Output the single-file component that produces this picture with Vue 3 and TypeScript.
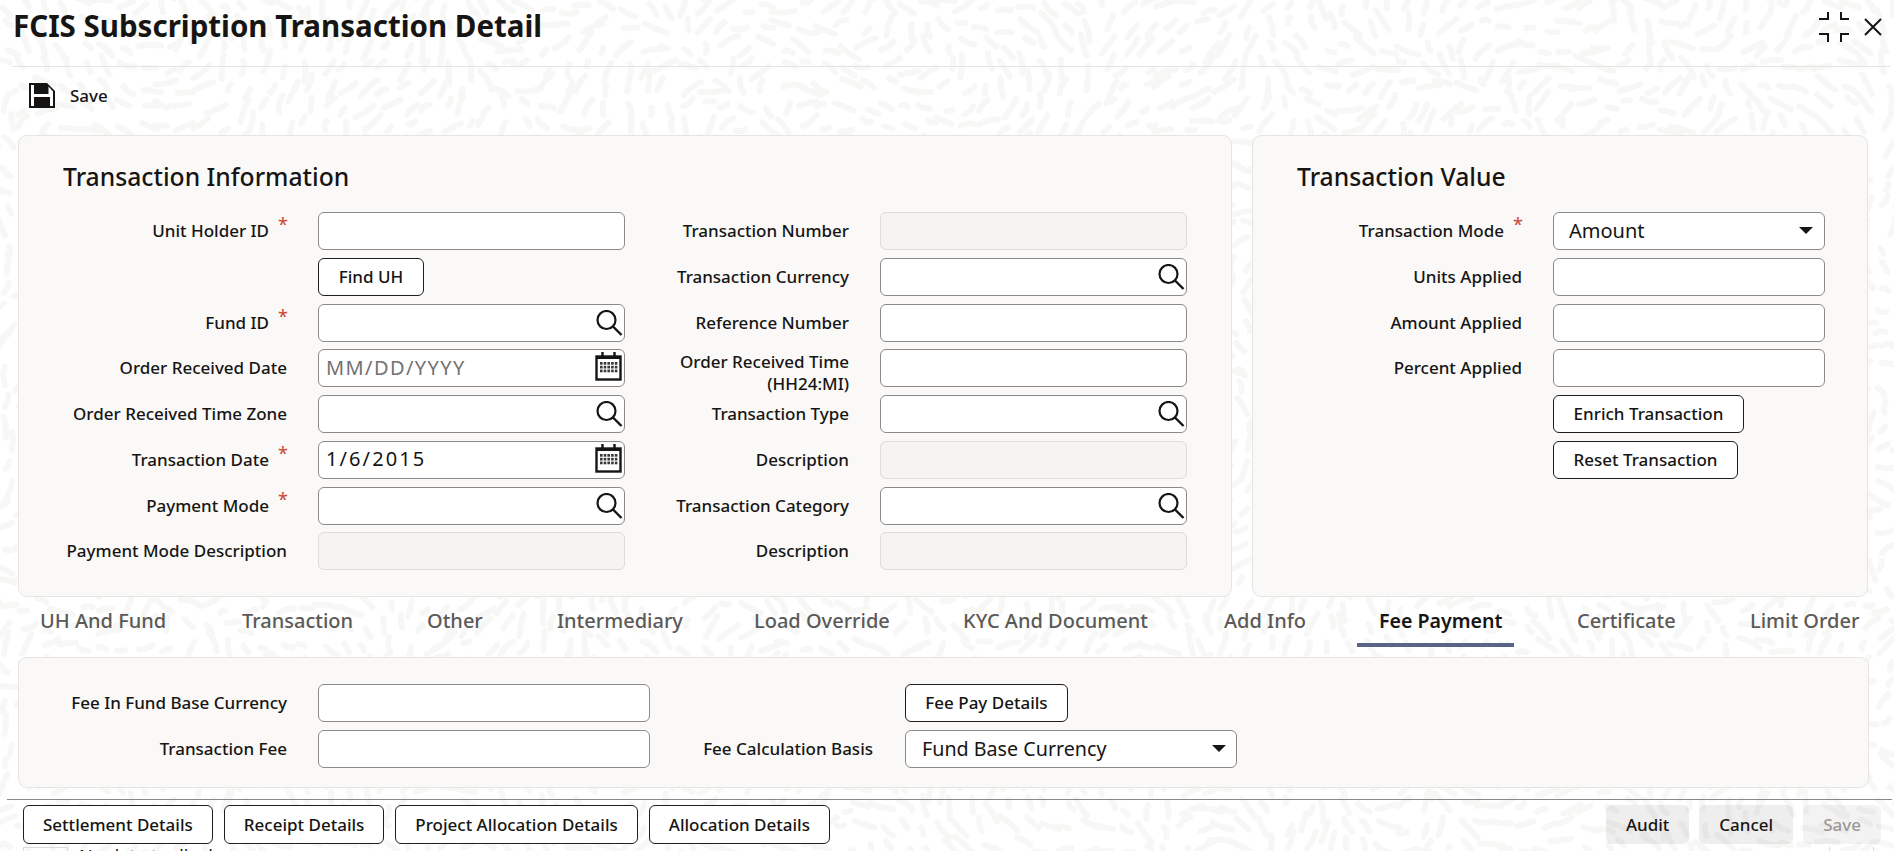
<script setup lang="ts">
type Kind = 'text' | 'search' | 'date' | 'off' | 'select'
interface Row { label: string; star?: boolean; kind: Kind; value?: string; placeholder?: string; two?: boolean }

const left: Row[] = [
  { label: 'Unit Holder ID', star: true, kind: 'text' },
  { label: '', kind: 'text', value: '__find' },
  { label: 'Fund ID', star: true, kind: 'search' },
  { label: 'Order Received Date', kind: 'date', placeholder: 'MM/DD/YYYY' },
  { label: 'Order Received Time Zone', kind: 'search' },
  { label: 'Transaction Date', star: true, kind: 'date', value: '1/6/2015' },
  { label: 'Payment Mode', star: true, kind: 'search' },
  { label: 'Payment Mode Description', kind: 'off' }
]
const mid: Row[] = [
  { label: 'Transaction Number', kind: 'off' },
  { label: 'Transaction Currency', kind: 'search' },
  { label: 'Reference Number', kind: 'text' },
  { label: 'Order Received Time (HH24:MI)', kind: 'text', two: true },
  { label: 'Transaction Type', kind: 'search' },
  { label: 'Description', kind: 'off' },
  { label: 'Transaction Category', kind: 'search' },
  { label: 'Description', kind: 'off' }
]
const info = left.flatMap((row, i) => [row, mid[i]])
const valueRows: Row[] = [
  { label: 'Units Applied', kind: 'text' },
  { label: 'Amount Applied', kind: 'text' },
  { label: 'Percent Applied', kind: 'text' }
]
const tabs = ['UH And Fund', 'Transaction', 'Other', 'Intermediary', 'Load Override', 'KYC And Document', 'Add Info', 'Fee Payment', 'Certificate', 'Limit Order']
const footerLeft = ['Settlement Details', 'Receipt Details', 'Project Allocation Details', 'Allocation Details']

// Decorative background: short rounded dashes following a smooth flow field.
function buildPattern(): string {
  let seed = 48271
  const rnd = () => {
    seed = (seed * 16807) % 2147483647
    return seed / 2147483647
  }
  const field = (x: number, y: number) =>
    1.4 * Math.sin(x / 61 + 1.3 * Math.cos(y / 83)) +
    1.2 * Math.cos(y / 47 - x / 113) +
    0.8 * Math.sin((x + y) / 151) +
    1.57
  const parts: string[] = []
  const step = 20
  for (let gy = -1; gy < 45; gy++) {
    for (let gx = -1; gx < 97; gx++) {
      const x = gx * step + rnd() * 13
      const y = gy * step + rnd() * 13
      const a = field(x, y) + (rnd() - 0.5) * 0.7
      const len = 3 + rnd() * 9
      const dx = Math.cos(a) * len
      const dy = Math.sin(a) * len
      const bend = (rnd() - 0.5) * 6
      const cx = x - Math.sin(a) * bend
      const cy = y + Math.cos(a) * bend
      parts.push(`M${(x - dx).toFixed(1)} ${(y - dy).toFixed(1)}Q${cx.toFixed(1)} ${cy.toFixed(1)} ${(x + dx).toFixed(1)} ${(y + dy).toFixed(1)}`)
    }
  }
  return parts.join('')
}
const pattern = buildPattern()
const dots: { x: number; y: number }[] = []
for (let r = 0; r < 3; r++) for (let c = 0; c < 5; c++) dots.push({ x: 5 + c * 3.7, y: 10 + r * 3.8 })
</script>

<template>
  <div class="page">
    <svg class="bg" width="1894" height="851" viewBox="0 0 1894 851" aria-hidden="true">
      <path :d="pattern" fill="none" stroke="#f7f7f6" stroke-width="6" stroke-linecap="round" />
    </svg>

    <header class="head">
      <h1>FCIS Subscription Transaction Detail</h1>
      <div class="win">
        <svg width="30" height="30" viewBox="0 0 30 30" fill="none" stroke="#161513" stroke-width="2">
          <path d="M0 7H9V0M22 0V7H30M0 22H9V30M22 30V22H30" />
        </svg>
        <svg width="18" height="18" viewBox="0 0 18 18" fill="none" stroke="#161513" stroke-width="2">
          <path d="M1 1L17 17M17 1L1 17" />
        </svg>
      </div>
    </header>

    <div class="tool">
      <svg width="26" height="25" viewBox="0 0 26 25">
        <path d="M0 0H18L26 8V25H0Z" fill="#161513" />
        <path d="M2 2H5V11H19.5V3.5L24 8.5V23H21V14H5V23H2Z" fill="#fff" />
      </svg>
      <span>Save</span>
    </div>

    <main class="top">
      <section class="panel p-info">
        <h2>Transaction Information</h2>
        <div class="grid-info">
          <template v-for="(row, i) in info" :key="i">
            <label class="lab" :class="[i % 2 ? 'lab-m' : 'lab-l', { two: row.two }]">
              <span>{{ row.label }}</span><i v-if="row.star" class="star">*</i>
            </label>
            <button v-if="row.value === '__find'" class="btn find">Find UH</button>
            <div v-else class="box">
              <input class="inp" :class="{ off: row.kind === 'off', date: row.kind === 'date' }" :disabled="row.kind === 'off'" :value="row.value" :placeholder="row.placeholder" />
              <svg v-if="row.kind === 'search'" class="ico" width="27" height="26" viewBox="0 0 27 26" fill="none" stroke="#161513">
                <circle cx="10.5" cy="10" r="9" stroke-width="2.2" />
                <path d="M17 16.5L25.5 25" stroke-width="2.4" />
              </svg>
              <svg v-if="row.kind === 'date'" class="ico cal" width="27" height="29" viewBox="0 0 27 29">
                <rect x="1.5" y="4.5" width="24" height="23" fill="none" stroke="#161513" stroke-width="2.4" />
                <rect x="1" y="4" width="25" height="3" fill="#161513" />
                <path d="M7.5 0V7M19.5 0V7" stroke="#161513" stroke-width="2.4" />
                <rect v-for="(d, k) in dots" :key="k" :x="d.x" :y="d.y" width="2.6" height="2.7" fill="#3a3937" />
              </svg>
            </div>
          </template>
        </div>
      </section>

      <section class="panel p-value">
        <h2>Transaction Value</h2>
        <div class="grid-value">
          <label class="lab lab-v"><span>Transaction Mode</span><i class="star">*</i></label>
          <div class="sel small"><span>Amount</span><b class="caret"></b></div>
          <template v-for="row in valueRows" :key="row.label">
            <label class="lab lab-v"><span>{{ row.label }}</span></label>
            <div class="box"><input class="inp" /></div>
          </template>
          <span></span>
          <div class="left"><button class="btn enrich">Enrich Transaction</button></div>
          <span></span>
          <div class="left"><button class="btn reset">Reset Transaction</button></div>
        </div>
      </section>
    </main>

    <nav class="tabs">
      <a v-for="t in tabs" :key="t" class="tab" :class="{ on: t === 'Fee Payment' }">{{ t }}</a>
    </nav>

    <section class="panel p-fee">
      <div class="grid-fee">
        <label class="lab lab-l"><span>Fee In Fund Base Currency</span></label>
        <div class="box"><input class="inp" /></div>
        <span></span>
        <div class="left"><button class="btn feepay">Fee Pay Details</button></div>
        <label class="lab lab-l"><span>Transaction Fee</span></label>
        <div class="box"><input class="inp" /></div>
        <label class="lab lab-f"><span>Fee Calculation Basis</span></label>
        <div class="sel wide"><span>Fund Base Currency</span><b class="caret"></b></div>
      </div>
    </section>

    <footer class="foot">
      <div class="group">
        <button v-for="f in footerLeft" :key="f" class="btn fbtn">{{ f }}</button>
      </div>
      <div class="group right">
        <button class="soft">Audit</button>
        <button class="soft">Cancel</button>
        <button class="soft dim">Save</button>
      </div>
    </footer>

    <div class="sliver">
      <span class="cell"></span>
      <span class="nodata">No data to display</span>
      <span class="cell end"></span>
    </div>
  </div>
</template>

<style scoped>
.page {
  position: relative;
  width: 1894px;
  height: 851px;
  overflow: hidden;
  background: #fff;
  color: #161513;
  font-family: "Noto Sans", "Open Sans", sans-serif;
  font-size: 16px;
}
.bg { position: absolute; left: 0; top: 0; }
.head, .tool, .top, .tabs, .p-fee, .foot, .sliver { position: relative; }

.head {
  height: 66px;
  margin: 0 4px 0 12px;
  border-bottom: 1px solid #e4e4e2;
  display: flex;
  justify-content: space-between;
  padding-left: 1px;
}
h1 {
  margin: 0;
  font-size: 29.5px;
  line-height: 51px;
  font-weight: 700;
  letter-spacing: 0;
}
.win { display: flex; gap: 15px; padding: 12px 8px 0 0; align-items: flex-start; }
.win svg:last-child { margin-top: 6px; }

.tool {
  height: 68px;
  padding: 16px 0 0 29px;
  display: flex;
  align-items: flex-start;
  gap: 15px;
  box-sizing: border-box;
  font-weight: 500;
  font-size: 17px;
  line-height: 25px;
}

.top { display: flex; gap: 20px; padding-left: 18px; }
.panel {
  box-sizing: border-box;
  background: #faf9f8;
  border: 1px solid #e5e5e3;
  border-radius: 9px;
}
.p-info { width: 1214px; height: 462px; }
.p-value { width: 616px; height: 462px; }
h2 {
  margin: 0;
  padding: 24px 0 0 44px;
  height: 76px;
  box-sizing: border-box;
  font-size: 24.7px;
  line-height: 34px;
  font-weight: 500;
}
.grid-info {
  display: grid;
  grid-template-columns: 299px 307px 255px 307px;
  grid-auto-rows: 38px;
  row-gap: 7.75px;
}
.grid-value {
  display: grid;
  grid-template-columns: 300px 272px;
  grid-auto-rows: 38px;
  row-gap: 7.75px;
}
.lab {
  display: flex;
  align-items: center;
  justify-content: flex-end;
  text-align: right;
  font-weight: 500;
  font-size: 17px;
  line-height: 22px;
}
.lab-l { padding-right: 31px; }
.lab-m { padding-right: 31px; padding-left: 30px; }
.lab-m.two { padding-top: 10px; }
.lab-v { padding-right: 31px; }
.lab-f { padding-right: 32px; }
.star {
  font-style: normal;
  color: #c74634;
  font-size: 18px;
  line-height: 16px;
  margin: -14px 0 0 9px;
  width: 9px;
  font-weight: 400;
  text-align: left;
}
.box { position: relative; }
.inp {
  display: block;
  width: 100%;
  height: 38px;
  box-sizing: border-box;
  background: #fff;
  border: 1px solid #8b8a88;
  border-radius: 6px;
  padding: 0 7px 2px;
  font: 400 20px "Noto Sans", sans-serif;
  color: #161513;
  outline: none;
}
.inp::placeholder { color: #737272; opacity: 1; }
.inp.date { letter-spacing: 2.1px; }
.inp.date::placeholder { letter-spacing: 1.4px; }
.inp.off { background: #f5f4f2; border-color: #dedcd9; }
.ico { position: absolute; right: 2px; top: 6px; }
.ico.cal { top: 3px; right: 3px; }

.btn {
  height: 38px;
  box-sizing: border-box;
  background: #fff;
  border: 1px solid #1f1e1c;
  border-radius: 6px;
  font: 500 17px "Noto Sans", sans-serif;
  color: #161513;
  padding: 0 19px 1px;
  white-space: nowrap;
}
.left { display: flex; }
.find { width: 106px; padding: 0 0 1px; align-self: stretch; }
.enrich { width: 191px; padding: 0 0 1px; }
.reset { width: 185px; padding: 0 0 1px; }
.feepay { width: 163px; padding: 0 0 1px; }

.sel {
  box-sizing: border-box;
  height: 38px;
  background: #fff;
  border: 1px solid #8b8a88;
  border-radius: 6px;
  display: flex;
  align-items: center;
  justify-content: space-between;
  font-size: 20px;
  padding: 0 11px 2px 15px;
}
.caret {
  width: 0;
  height: 0;
  border-left: 7.5px solid transparent;
  border-right: 7.5px solid transparent;
  border-top: 7.5px solid #161513;
}
.wide { width: 332px; padding-left: 16px; padding-right: 10px; font-size: 19.7px; }

.tabs {
  height: 50px;
  margin-left: 18px;
  display: grid;
  grid-template-columns: 202px 185px 130px 197px 209px 261px 155px 198px 173px auto;
  justify-items: start;
}
.tab {
  box-sizing: border-box;
  height: 50px;
  padding: 9px 0 0 22px;
  line-height: 30px;
  font-size: 20px;
  font-weight: 500;
  color: #5b5a58;
  white-space: nowrap;
}
.tab.on {
  width: 157px;
  color: #161513;
  font-weight: 600;
  font-size: 19.6px;
  border-bottom: 4px solid #5a6586;
}

.p-fee { width: 1851px; height: 131px; margin: 10px 0 0 18px; padding-top: 26px; }
.grid-fee {
  display: grid;
  grid-template-columns: 299px 332px 255px 332px;
  grid-auto-rows: 38px;
  row-gap: 8px;
}

.foot {
  margin: 11px 2px 0 7px;
  height: 46px;
  box-sizing: border-box;
  border-top: 1px solid #8a8988;
  padding: 5px 11px 0 16px;
  display: flex;
  justify-content: space-between;
}
.group { display: flex; gap: 11px; }
.group.right { gap: 10px; }
.fbtn { height: 39px; }
.soft {
  height: 39px;
  border: none;
  border-radius: 6px;
  padding: 0 20px;
  background: rgba(22, 21, 19, 0.07);
  font: 500 17px "Noto Sans", sans-serif;
  color: #161513;
}
.soft.dim { color: #9a9998; background: rgba(22, 21, 19, 0.05); }

.sliver {
  display: flex;
  height: 10px;
  padding: 2px 20px 0 23px;
  overflow: hidden;
}
.cell {
  width: 45px;
  height: 10px;
  box-sizing: border-box;
  border: 1px solid #dcdbd9;
  border-width: 1px 1px 0 1px;
  flex: none;
}
.nodata { margin-left: 11px; line-height: 22px; flex: 1; margin-top: -2px; font-size: 18px; }
.cell.end { border-top: none; margin-right: 0; }
</style>

<style>
html, body { margin: 0; background: #fff; }
</style>
